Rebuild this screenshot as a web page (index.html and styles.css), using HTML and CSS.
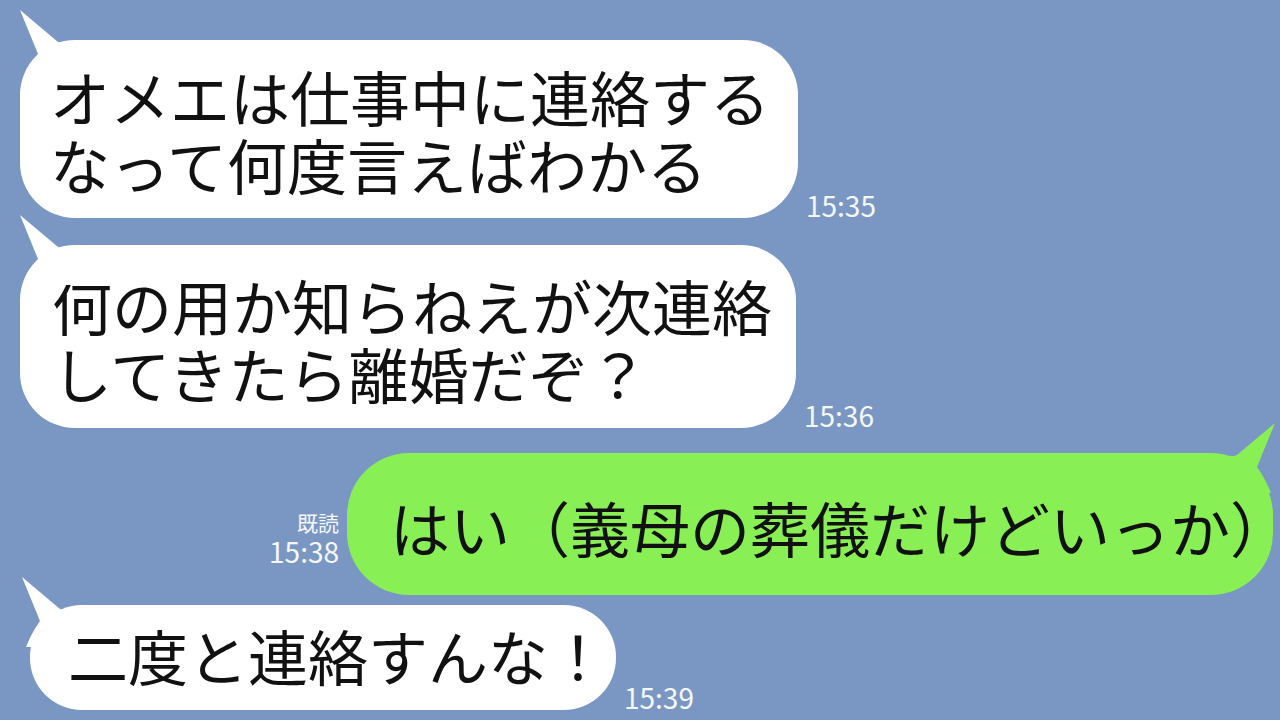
FILE: index.html
```html
<!DOCTYPE html>
<html lang="ja">
<head>
  <meta charset="UTF-8" />
  <meta name="viewport" content="width=device-width, initial-scale=1.0" />
  <title>トーク</title>
  <link rel="stylesheet" href="styles.css">
</head>
<body>
  <div class="chat">

    <div class="row row-1">
      <div class="bubble bubble-in b1">
        <svg class="tail" viewBox="0 0 60 70" width="60" height="70"><path d="M0 0 L38 32 Q44 35 56 31 L56 70 L4 70 Q10 55 18 44 Z"/></svg>
        <span class="line">オメエは仕事中に連絡する</span>
        <span class="line">なって何度言えばわかる</span>
      </div>
      <div class="meta"><span class="time">15:35</span></div>
    </div>

    <div class="row row-2">
      <div class="bubble bubble-in b2">
        <svg class="tail" viewBox="0 0 60 70" width="60" height="70"><path d="M0 0 L38 32 Q44 35 56 31 L56 70 L4 70 Q10 55 18 44 Z"/></svg>
        <span class="line">何の用か知らねえが次連絡</span>
        <span class="line">してきたら離婚だぞ？</span>
      </div>
      <div class="meta"><span class="time">15:36</span></div>
    </div>

    <div class="row row-3 row-out">
      <div class="meta meta-out">
        <span class="read">既読</span>
        <span class="time">15:38</span>
      </div>
      <div class="bubble bubble-out">
        <svg class="tail tail-out" viewBox="0 0 60 70" width="60" height="70"><path d="M0 0 L38 32 Q44 35 56 31 L56 70 L4 70 Q10 55 18 44 Z"/></svg>
        <span class="line">はい（義母の葬儀だけどいっか<span class="half">）</span></span>
      </div>
    </div>

    <div class="row row-4">
      <div class="bubble bubble-in b4">
        <svg class="tail tail-small" viewBox="0 0 60 70" width="60" height="70"><path d="M0 0 L38 32 Q44 35 56 31 L56 70 L4 70 Q10 55 18 44 Z"/></svg>
        <span class="line">二度と連絡すんな！</span>
      </div>
      <div class="meta"><span class="time">15:39</span></div>
    </div>

  </div>
</body>
</html>
```

FILE: styles.css
```css
body { margin: 0; background: #7a97c3; font-family: "Noto Sans CJK JP", "Noto Sans", sans-serif; overflow: hidden; }
.chat { width: 1280px; height: 720px; display: flex; flex-direction: column; }
.row { display: flex; align-items: flex-end; gap: 8px; padding-left: 20px; }
.row-1 { margin-top: 40px; }
.row-2 { margin-top: 27px; }
.row-3 { margin-top: 25px; }
.row-4 { margin-top: 10px; padding-left: 30px; }
.row-out { justify-content: flex-end; padding-left: 0; padding-right: 7px; }

.bubble { position: relative; display: flex; flex-direction: column; color: #111; font-size: 60px; line-height: 68px; white-space: nowrap; }
.bubble .line { display: block; height: 68px; }
.bubble-in { background: #fff; border-radius: 55px; }
.bubble-out { background: #88ef55; border-radius: 62px; padding: 40px 13px 34px 43px; }
.b1 { padding: 22px 28px 20px 30px; }
.b2 { padding: 26px 24px 21px 32px; }
.b4 { border-radius: 52px; padding: 16px 8px 21px 38px; }
.half { font-feature-settings: "halt"; }

.tail { position: absolute; left: 0; top: -30px; fill: #fff; }
.tail-small { left: -8px; top: -28px; }
.tail-out { left: auto; right: -2px; fill: #88ef55; transform: scaleX(-1); }

.meta { display: flex; flex-direction: column; align-items: flex-end; color: #f5f7fb; margin-bottom: -2px; }
.meta .time { font-size: 28px; line-height: 30px; }
.meta .read { font-size: 21px; line-height: 28px; }
.meta-out { margin-bottom: 29px; }
```
